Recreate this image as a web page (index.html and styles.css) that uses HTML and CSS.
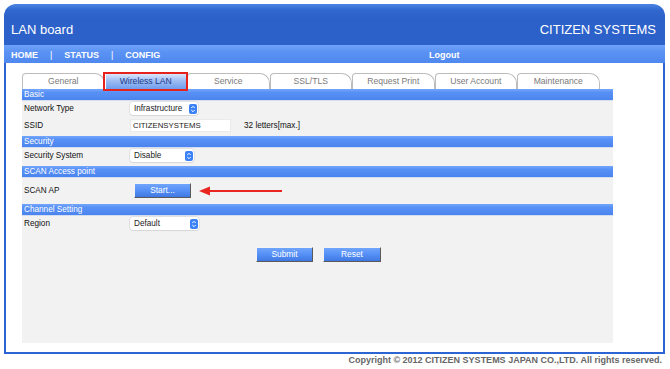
FILE: index.html
```html
<!DOCTYPE html>
<html>
<head>
<meta charset="utf-8">
<title>LAN board</title>
<link rel="stylesheet" href="styles.css">
</head>
<body>
<div class="frame">
  <div class="header">
    <span class="title">LAN board</span>
    <span class="brand">CITIZEN SYSTEMS</span>
  </div>
  <div class="nav">
    <div class="nav-left">
      <span class="nav-link">HOME</span><span class="sep">|</span><span class="nav-link">STATUS</span><span class="sep">|</span><span class="nav-link">CONFIG</span>
    </div>
    <span class="nav-link">Logout</span>
  </div>
  <div class="content">
    <div class="tabs">
      <div class="tab">General</div>
      <div class="tab active">Wireless LAN</div>
      <div class="tab">Service</div>
      <div class="tab">SSL/TLS</div>
      <div class="tab">Request Print</div>
      <div class="tab">User Account</div>
      <div class="tab">Maintenance</div>
    </div>
    <div class="panel">
      <div class="bar">Basic</div>
      <div class="row">
        <div class="label">Network Type</div>
        <div class="select w-nt"><span>Infrastructure</span><svg class="spin" width="8" height="10" viewBox="0 0 8 10"><rect x="0" y="0" width="8" height="10" rx="2" fill="#3b82f6"/><path d="M2.3 4 L4 2.3 L5.7 4 M2.3 6 L4 7.7 L5.7 6" stroke="#fff" stroke-width="1" fill="none"/></svg></div>
      </div>
      <div class="row">
        <div class="label">SSID</div>
        <div class="input">CITIZENSYSTEMS</div>
        <div class="hint">32 letters[max.]</div>
      </div>
      <div class="bar gap">Security</div>
      <div class="row">
        <div class="label">Security System</div>
        <div class="select w-ss"><span>Disable</span><svg class="spin" width="8" height="10" viewBox="0 0 8 10"><rect x="0" y="0" width="8" height="10" rx="2" fill="#3b82f6"/><path d="M2.3 4 L4 2.3 L5.7 4 M2.3 6 L4 7.7 L5.7 6" stroke="#fff" stroke-width="1" fill="none"/></svg></div>
      </div>
      <div class="bar gap">SCAN Access point</div>
      <div class="row tall">
        <div class="label">SCAN AP</div>
        <div class="btn start">Start...</div>
        <svg class="arrow" width="84" height="10" viewBox="0 0 84 10"><path d="M10 5 H83" stroke="#e8261f" stroke-width="2"/><path d="M0 5 L11 0.5 L11 9.5 Z" fill="#e8261f"/></svg>
      </div>
      <div class="bar">Channel Setting</div>
      <div class="row">
        <div class="label">Region</div>
        <div class="select w-rg"><span>Default</span><svg class="spin" width="8" height="10" viewBox="0 0 8 10"><rect x="0" y="0" width="8" height="10" rx="2" fill="#3b82f6"/><path d="M2.3 4 L4 2.3 L5.7 4 M2.3 6 L4 7.7 L5.7 6" stroke="#fff" stroke-width="1" fill="none"/></svg></div>
      </div>
      <div class="actions">
        <div class="btn">Submit</div>
        <div class="btn reset">Reset</div>
      </div>
    </div>
  </div>
</div>
<div class="copyright">Copyright © 2012 CITIZEN SYSTEMS JAPAN CO.,LTD. All rights reserved.</div>
</body>
</html>
```
FILE: styles.css
```css
* { box-sizing: border-box; }
html, body { margin: 0; padding: 0; background: #fff; }
body {
  font-family: "Liberation Sans", Arial, sans-serif;
  font-size: 8.2px;
  color: #222;
}
.frame {
  margin: 4px 0 0 4px;
  width: 661px;
}
.header {
  height: 41px;
  border-radius: 12px 12px 0 0;
  background: linear-gradient(#4d84e4 0px, #3168d0 6px, #2c61c9 14px, #2c61c9 100%);
  display: flex;
  align-items: center;
  justify-content: space-between;
  padding: 9px 9px 0 7px;
  color: #fff;
  font-size: 13px;
}
.nav {
  height: 18px;
  background: linear-gradient(#6ea2fa, #5a92f4 40%, #4f88ee 100%);
  display: flex;
  align-items: center;
  padding-left: 7px;
  padding-top: 1px;
  color: #fff;
  font-size: 9px;
  font-weight: bold;
}
.nav-left {
  width: 418px;
  display: flex;
  align-items: center;
}
.sep {
  font-weight: normal;
  margin: 0 12px;
}
.content {
  border: 2px solid #2d64d4;
  border-top: none;
  background: #fff;
  padding: 10px 50px 9px 16px;
}
.tabs {
  display: flex;
  height: 16px;
}
.tab {
  width: 82.5px;
  height: 16px;
  background: #fff;
  border: 1px solid #bcbcbc;
  border-bottom: none;
  border-radius: 4px 10px 0 0;
  color: #7a7a7a;
  text-align: center;
  line-height: 15px;
  font-size: 8.6px;
}
.tab.active {
  background: linear-gradient(#dbe7fc, #9dbdf4 45%, #6f9ded 100%);
  color: #1e3a8a;
  border-color: #fff;
  border-radius: 0;
  position: relative;
  z-index: 1;
}
.tab.active::after {
  content: "";
  position: absolute;
  left: -3px;
  right: -2px;
  top: -2px;
  bottom: -2px;
  border: 2px solid #e5221c;
}
.panel {
  height: 254px;
  background: #f2f2f2;
}
.bar {
  height: 11px;
  line-height: 11px;
  padding-left: 2px;
  color: #fff;
  background: linear-gradient(#74a7fc, #5891f6 30%, #4b84ec 100%);
  box-shadow: 0 1px 0 #d3def2;
}
.bar.gap { margin-top: 2px; }
.row {
  height: 17px;
  display: flex;
  align-items: center;
  padding-left: 2px;
}
.row.tall { height: 27px; }
.label {
  width: 106px;
  color: #111;
}
.select {
  height: 13px;
  background: #fff;
  border-radius: 3px;
  box-shadow: 0 0 0 0.5px #d0d0d0, 0 1px 1px rgba(0,0,0,0.08);
  display: flex;
  align-items: center;
  justify-content: space-between;
  padding: 0 1.5px 0 4px;
  color: #222;
}
.spin { display: block; }
.w-nt { width: 68px; }
.w-ss { width: 64px; }
.w-rg { width: 69px; }
.input {
  width: 101px;
  height: 13px;
  background: #fff;
  border: 1px solid #eaeaea;
  padding-left: 2px;
  line-height: 11px;
  font-size: 7.8px;
  color: #222;
}
.hint {
  margin-left: 13px;
  color: #111;
}
.btn {
  width: 57px;
  height: 15px;
  line-height: 13px;
  text-align: center;
  color: #fff;
  font-size: 8.4px;
  background: linear-gradient(#70a5fc, #5590f6 50%, #3f78e2 100%);
  border: 1px solid;
  border-color: #f4f4f4 #5a5a5a #5a5a5a #f4f4f4;
}
.btn.start { margin-left: 4px; }
.arrow { margin-left: 8px; display: block; }
.actions {
  display: flex;
  justify-content: center;
  gap: 10px;
  margin-top: 15px;
  padding-left: 2px;
}
.btn.reset { width: 58px; }
.copyright {
  padding-right: 8px;
  text-align: right;
  font-weight: bold;
  color: #666;
  line-height: 12px;
  font-size: 9px;
}
```
